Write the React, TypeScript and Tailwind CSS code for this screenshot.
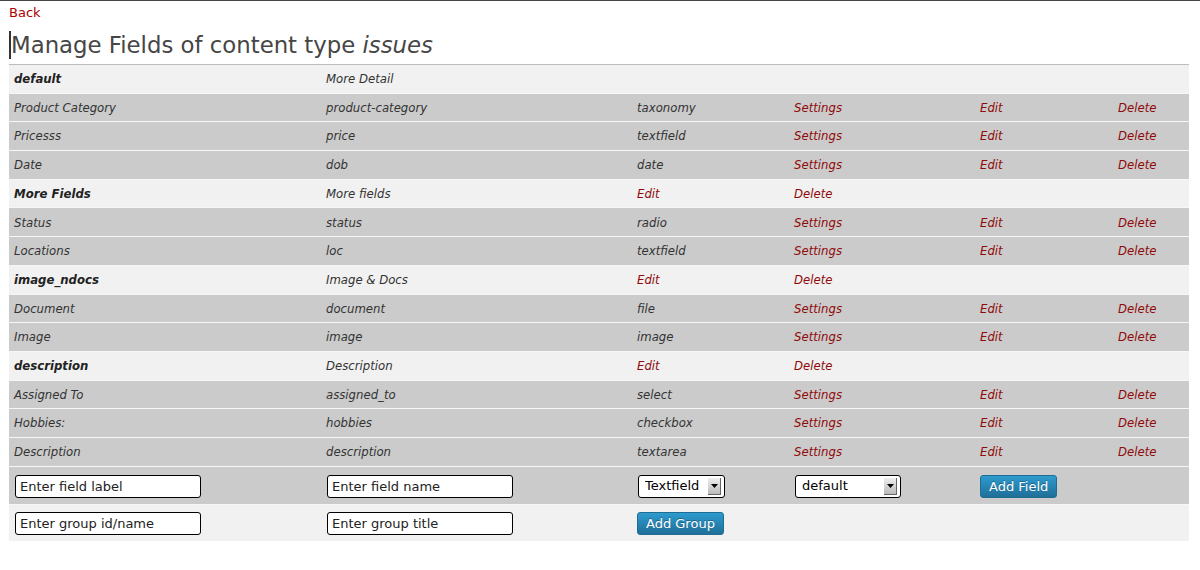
import { ReactNode } from "react";

type Row =
  | { kind: "group"; id: string; title: string; actions: boolean }
  | { kind: "field"; label: string; name: string; type: string };

const rows: Row[] = [
  { kind: "group", id: "default", title: "More Detail", actions: false },
  { kind: "field", label: "Product Category", name: "product-category", type: "taxonomy" },
  { kind: "field", label: "Pricesss", name: "price", type: "textfield" },
  { kind: "field", label: "Date", name: "dob", type: "date" },
  { kind: "group", id: "More Fields", title: "More fields", actions: true },
  { kind: "field", label: "Status", name: "status", type: "radio" },
  { kind: "field", label: "Locations", name: "loc", type: "textfield" },
  { kind: "group", id: "image_ndocs", title: "Image & Docs", actions: true },
  { kind: "field", label: "Document", name: "document", type: "file" },
  { kind: "field", label: "Image", name: "image", type: "image" },
  { kind: "group", id: "description", title: "Description", actions: true },
  { kind: "field", label: "Assigned To", name: "assigned_to", type: "select" },
  { kind: "field", label: "Hobbies:", name: "hobbies", type: "checkbox" },
  { kind: "field", label: "Description", name: "description", type: "textarea" },
];

const cols = ["w-[312px]", "w-[311px]", "w-[157px]", "w-[186px]", "w-[138px]", "w-[76px]"];

function Cell({ i, children }: { i: number; children?: ReactNode }) {
  return <div className={`${cols[i]} shrink-0 px-[5px]`}>{children}</div>;
}

function RedLink({ children }: { children: ReactNode }) {
  return (
    <a href="#" className="text-[#8f0a0a] italic">
      {children}
    </a>
  );
}

function TextInput({ placeholder }: { placeholder: string }) {
  return (
    <input
      placeholder={placeholder}
      className="ml-px h-[23px] w-[186px] rounded-[3px] border border-black bg-white px-[4px] font-['DejaVu_Sans',sans-serif] text-[13px] text-[#222] placeholder:text-[#222] outline-none"
    />
  );
}

function FakeSelect({ value, width }: { value: string; width: string }) {
  return (
    <div className={`relative ml-px h-[23px] ${width} rounded-[3px] border border-black bg-white`}>
      <select className="h-full w-full appearance-none bg-transparent pl-[6px] font-['DejaVu_Sans',sans-serif] text-[13px] text-black outline-none">
        <option>{value}</option>
      </select>
      <div className="pointer-events-none absolute right-[3px] top-[2px] flex h-[17px] w-[13px] items-center justify-center border-r border-b border-[#666] bg-gradient-to-b from-[#eee] to-[#bbb]">
        <svg width="7" height="4" viewBox="0 0 7 4">
          <path d="M0 0h7L3.5 4z" fill="#000" />
        </svg>
      </div>
    </div>
  );
}

function BlueButton({ children }: { children: ReactNode }) {
  return (
    <button className="h-[23px] rounded-[3px] border border-[#1f6d92] bg-gradient-to-b from-[#2e9bcf] to-[#1f6f98] px-[8px] font-['DejaVu_Sans',sans-serif] text-[13px] leading-none text-white [text-shadow:0_-1px_0_rgba(0,0,0,0.3)]">
      {children}
    </button>
  );
}

export default function App() {
  return (
    <div className="min-h-[570px] bg-white font-['DejaVu_Sans',sans-serif] text-[13px] text-[#333] border-t border-[#444]">
      <div className="px-[9px] pt-[4px]">
        <a href="#" className="block leading-[16px] text-[#aa0000]">
          Back
        </a>
        <h2 className="mt-[10px] flex h-[28px] items-center border-l-2 border-[#333] text-[22.8px] font-normal leading-[28px] text-[#464646]">
          Manage Fields of content type&nbsp;<em>issues</em>
        </h2>
        <div className="mt-[5px] w-[1180px] border-t border-[#bdbdbd] font-['DejaVu_Sans_Condensed','DejaVu_Sans',sans-serif]">
          {rows.map((r, idx) =>
            r.kind === "group" ? (
              <div key={idx} className="flex h-[28.7px] items-center border-b border-[#f7f7f7] bg-[#f1f1f1] italic">
                <Cell i={0}>
                  <span className="font-bold text-[#222]">{r.id}</span>
                </Cell>
                <Cell i={1}>{r.title}</Cell>
                {r.actions && (
                  <>
                    <Cell i={2}>
                      <RedLink>Edit</RedLink>
                    </Cell>
                    <Cell i={3}>
                      <RedLink>Delete</RedLink>
                    </Cell>
                  </>
                )}
              </div>
            ) : (
              <div key={idx} className="flex h-[28.7px] items-center border-b border-[#f7f7f7] bg-[#cbcbcb] italic">
                <Cell i={0}>{r.label}</Cell>
                <Cell i={1}>{r.name}</Cell>
                <Cell i={2}>{r.type}</Cell>
                <Cell i={3}>
                  <RedLink>Settings</RedLink>
                </Cell>
                <Cell i={4}>
                  <RedLink>Edit</RedLink>
                </Cell>
                <Cell i={5}>
                  <RedLink>Delete</RedLink>
                </Cell>
              </div>
            )
          )}
          <div className="flex h-[38px] items-center border-b border-[#f7f7f7] bg-[#cbcbcb] pt-[2px]">
            <Cell i={0}>
              <TextInput placeholder="Enter field label" />
            </Cell>
            <Cell i={1}>
              <TextInput placeholder="Enter field name" />
            </Cell>
            <Cell i={2}>
              <FakeSelect value="Textfield" width="w-[87px]" />
            </Cell>
            <Cell i={3}>
              <FakeSelect value="default" width="w-[106px]" />
            </Cell>
            <Cell i={4}>
              <BlueButton>Add Field</BlueButton>
            </Cell>
            <Cell i={5} />
          </div>
          <div className="flex h-[36px] items-center bg-[#f1f1f1] pt-[2px]">
            <Cell i={0}>
              <TextInput placeholder="Enter group id/name" />
            </Cell>
            <Cell i={1}>
              <TextInput placeholder="Enter group title" />
            </Cell>
            <Cell i={2}>
              <BlueButton>Add Group</BlueButton>
            </Cell>
          </div>
        </div>
      </div>
    </div>
  );
}
